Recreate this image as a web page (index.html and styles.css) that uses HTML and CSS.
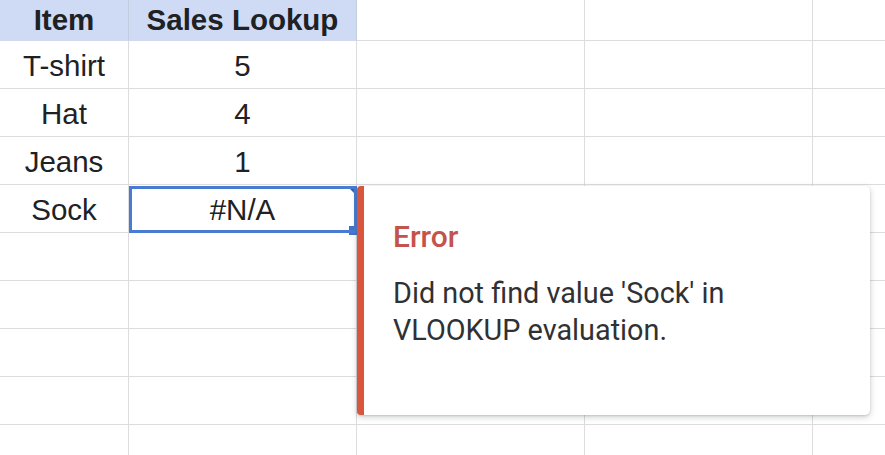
FILE: index.html
```html
<!DOCTYPE html>
<html>
<head>
<meta charset="utf-8">
<link rel="stylesheet" href="styles.css">
</head>
<body>
<div class="sheet">
  <div class="grid">
    <div class="cell head">Item</div>
    <div class="cell head">Sales Lookup</div>
    <div class="cell"></div>
    <div class="cell"></div>
    <div class="cell"></div>

    <div class="cell">T-shirt</div>
    <div class="cell">5</div>
    <div class="cell"></div>
    <div class="cell"></div>
    <div class="cell"></div>

    <div class="cell">Hat</div>
    <div class="cell">4</div>
    <div class="cell"></div>
    <div class="cell"></div>
    <div class="cell"></div>

    <div class="cell">Jeans</div>
    <div class="cell">1</div>
    <div class="cell"></div>
    <div class="cell"></div>
    <div class="cell"></div>

    <div class="cell">Sock</div>
    <div class="cell selected">#N/A<span class="flag"></span><span class="handle"></span></div>
    <div class="cell"></div>
    <div class="cell"></div>
    <div class="cell"></div>

    <div class="cell"></div><div class="cell"></div><div class="cell"></div><div class="cell"></div><div class="cell"></div>
    <div class="cell"></div><div class="cell"></div><div class="cell"></div><div class="cell"></div><div class="cell"></div>
    <div class="cell"></div><div class="cell"></div><div class="cell"></div><div class="cell"></div><div class="cell"></div>
    <div class="cell"></div><div class="cell"></div><div class="cell"></div><div class="cell"></div><div class="cell"></div>
    <div class="cell"></div><div class="cell"></div><div class="cell"></div><div class="cell"></div><div class="cell"></div>
  </div>

  <div class="tooltip">
    <div class="tip-title">Error</div>
    <div class="tip-body">Did not find value 'Sock' in<br>VLOOKUP evaluation.</div>
  </div>
</div>
</body>
</html>
```

FILE: styles.css
```css
html, body {
  margin: 0;
  padding: 0;
  background: #ffffff;
  overflow: hidden;
}

.sheet {
  position: relative;
  width: 885px;
  height: 455px;
  overflow: hidden;
}

.grid {
  display: grid;
  grid-template-columns: 129px 228px 228px 228px 228px;
  grid-template-rows: 41px repeat(9, 48px);
}

.cell {
  box-sizing: border-box;
  border-right: 1px solid #dcdcde;
  border-bottom: 1px solid #dcdcde;
  font-family: "Liberation Sans", Arial, sans-serif;
  font-size: 29.5px;
  color: #202124;
  display: flex;
  align-items: center;
  justify-content: center;
  padding-top: 3px;
}

.head {
  background: #cfdbf4;
  font-weight: bold;
  padding-top: 0;
  border-right-color: #c3cde0;
  border-bottom-color: #d2d9e8;
}

.selected {
  position: relative;
}

.selected::after {
  content: "";
  position: absolute;
  left: 0;
  top: 1px;
  right: -1px;
  bottom: -1px;
  border: 3px solid #4a7bd2;
  pointer-events: none;
}

.flag {
  position: absolute;
  top: 1px;
  right: -1px;
  width: 0;
  height: 0;
  border-left: 10px solid transparent;
  border-top: 10px solid #3d5f9f;
}

.handle {
  position: absolute;
  right: -1px;
  bottom: -3px;
  width: 8px;
  height: 9px;
  background: #3f74cc;
}

.tooltip {
  position: absolute;
  left: 357px;
  top: 186px;
  width: 513px;
  height: 229px;
  box-sizing: border-box;
  background: #ffffff;
  border-left: 7px solid #d9553c;
  border-radius: 4px 5px 5px 4px;
  box-shadow: 0 2px 6px rgba(60, 64, 67, 0.25), 0 1px 2px rgba(60, 64, 67, 0.15);
  padding: 31.5px 20px 0 29px;
  font-family: Roboto, "Noto Sans", sans-serif;
}

.tip-title {
  font-size: 30px;
  font-weight: 500;
  color: #c4534c;
  line-height: 37px;
}

.tip-body {
  margin-top: 20px;
  font-size: 28.8px;
  color: #303134;
  line-height: 37px;
}
```
